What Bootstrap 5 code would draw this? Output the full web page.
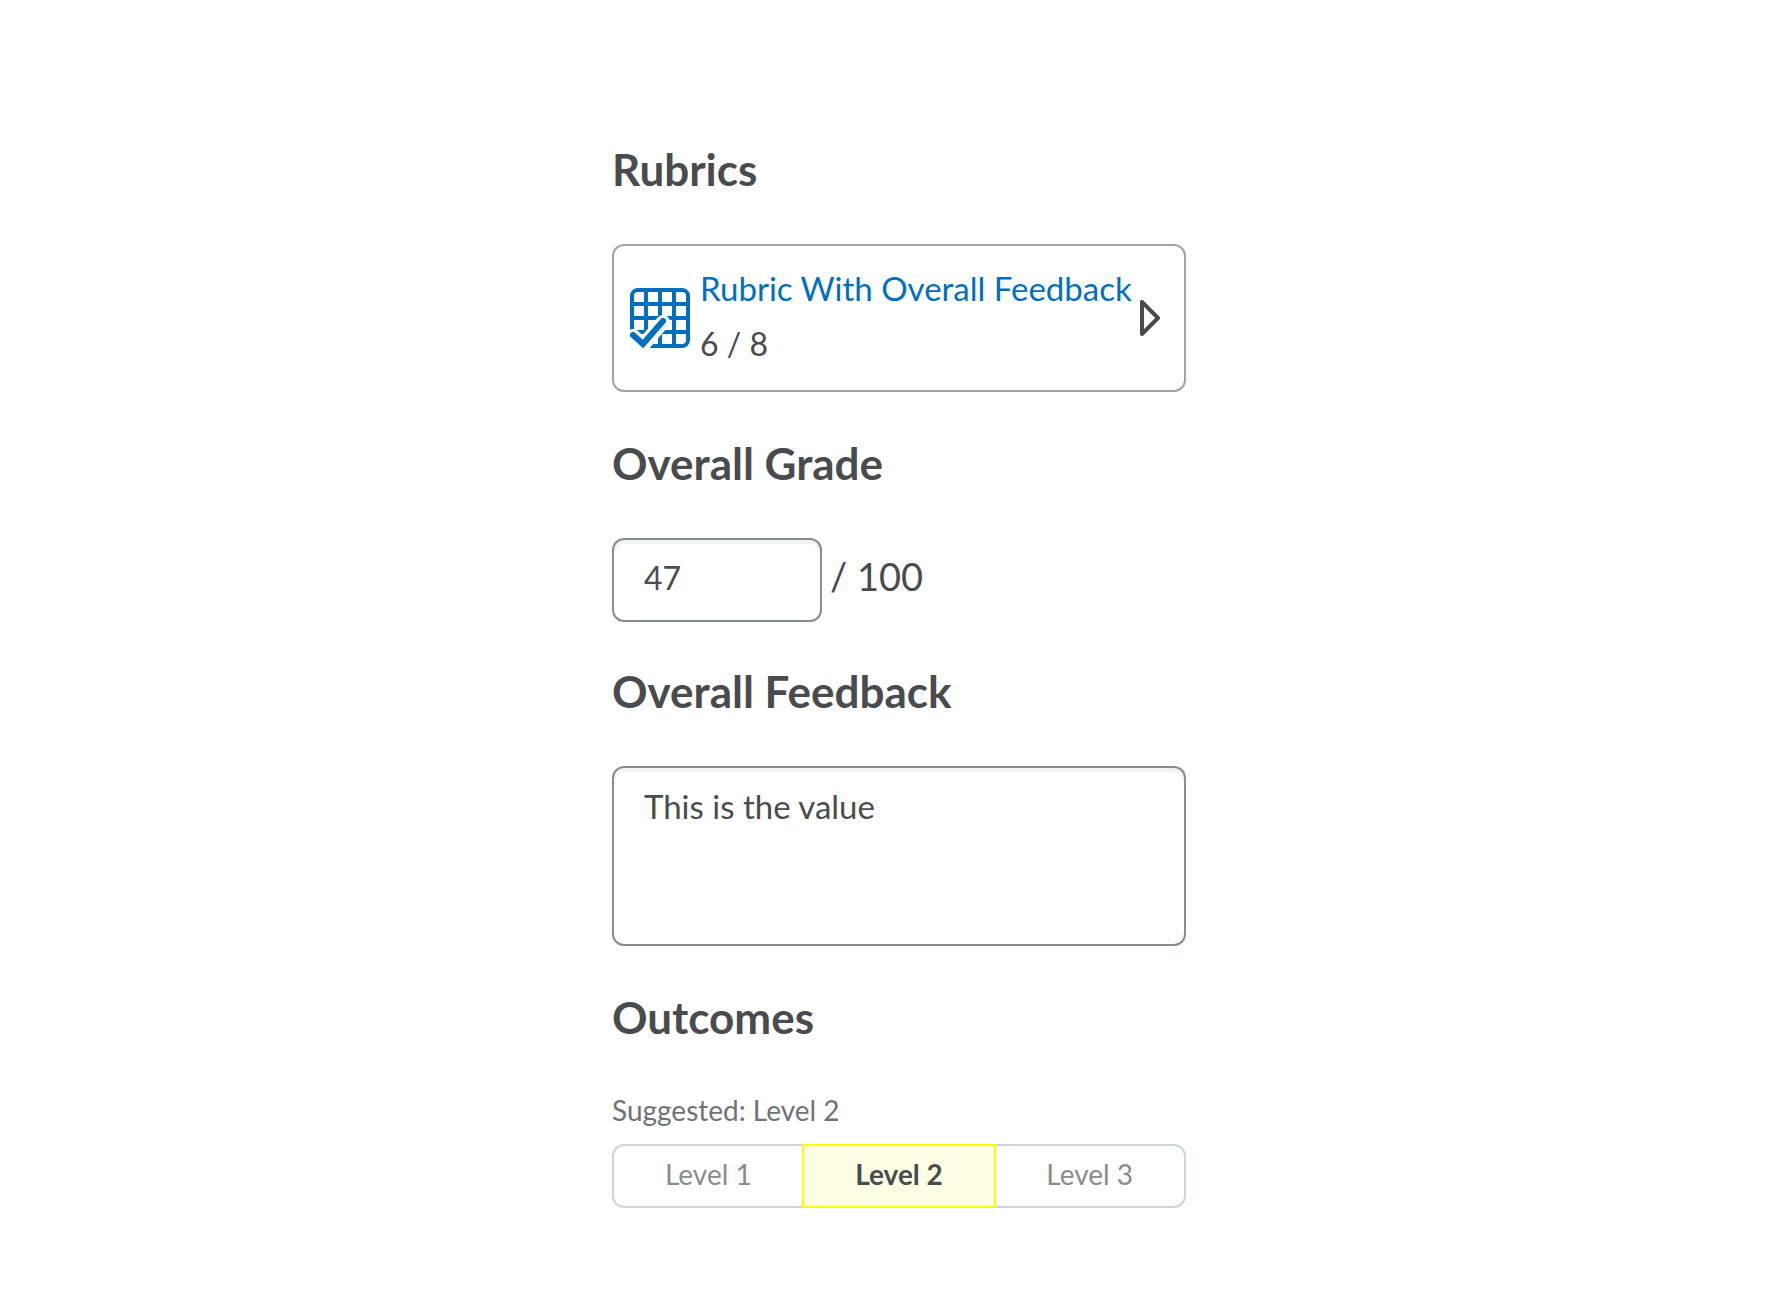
<!DOCTYPE html>
<html lang="en">
<head>
<meta charset="utf-8">
<meta name="viewport" content="width=device-width, initial-scale=1">
<title>Rubrics</title>
<link href="https://cdn.jsdelivr.net/npm/bootstrap@5.3.0/dist/css/bootstrap.min.css" rel="stylesheet">
<style>
body { font-family: Lato, "Open Sans", sans-serif; font-size: 32px; line-height: 48px; color: #494c4e; }
.grade-page { padding: 139px 0 100px 30px; }
.grade-panel { width: 100%; max-width: 574px; }
.panel-title { font-size: 44px; line-height: 60px; font-weight: 700; margin-bottom: 45px; }
.panel-block { margin-bottom: 41px; }
.grade-row { margin-bottom: 39px; }
.rubric-tile { border: 2px solid #9ea5a9; border-radius: 12px; padding: 14px 24px 18px 16px; }
.rubric-tile a { color: #006fbf; text-decoration: none; font-size: 33px; line-height: 56px; white-space: nowrap; }
.rubric-text { padding-left: 10px; }
.rubric-score { line-height: 56px; }
.rubric-icon, .rubric-arrow { margin-top: 4px; }
.grade-field.form-control { font-size: 33px; line-height: 48px; color: #494c4e; border: 2px solid #868c8f; border-radius: 12px; box-shadow: inset 0 4px 0 0 #f1f2f3; padding: 14px 30px 18px; background: #fff; }
.grade-number.form-control { width: 210px; font-size: 32px; }
.grade-outof { font-size: 38px; line-height: 76px; }
textarea.grade-field { height: 180px; resize: none; }
.suggested { font-size: 28px; line-height: 36px; color: #6e7376; margin-bottom: 16px; }
.level-group { height: 64px; }
.level-group .btn { font-size: 28px; line-height: 32px; padding: 12px 8px 16px; border: 2px solid #cdd5dc; border-radius: 12px; color: #868c8f; background: #fff; flex: 95 1 0; }
.level-group .btn:first-child { border-right-width: 0; }
.level-group .btn:last-child { border-left-width: 0; }
.level-group .btn.active { color: #494c4e; font-weight: 700; background: #ffffe5; border-color: #ff0; flex-grow: 96; }
.level-group > .btn:not(:first-child) { margin-left: 0; }
</style>
</head>
<body>
<main class="grade-page d-flex justify-content-center">
  <div class="grade-panel">
    <section>
      <h2 class="panel-title">Rubrics</h2>
      <div class="rubric-tile panel-block d-flex align-items-center">
        <svg class="rubric-icon flex-shrink-0" width="60" height="60" viewBox="0 0 60 60" aria-hidden="true">
          <g fill="none" stroke="#006fbf" stroke-width="4">
            <rect x="2" y="2" width="56" height="56" rx="6"/>
            <path d="M16 2v56M30 2v56M44 2v56M2 16h56M2 30h56M2 44h56"/>
          </g>
          <path d="M3 48l10 9 20-23" fill="none" stroke="#fff" stroke-width="14" stroke-linecap="round"/>
          <path d="M0 50v10h20l-5-6z" fill="#fff"/>
          <path d="M3 47l10 9 20-23" fill="none" stroke="#006fbf" stroke-width="6" stroke-linecap="round"/>
        </svg>
        <div class="rubric-text flex-grow-1">
          <a class="d-block" href="#">Rubric With Overall Feedback</a>
          <div class="rubric-score">6 / 8</div>
        </div>
        <svg class="rubric-arrow flex-shrink-0" width="20" height="36" viewBox="0 0 20 36" aria-hidden="true"><path d="M2 2v32L18 18z" fill="none" stroke="#494c4e" stroke-width="4" stroke-linejoin="round"/></svg>
      </div>
    </section>
    <section>
      <h2 class="panel-title"><label for="grade">Overall Grade</label></h2>
      <div class="grade-row d-flex">
        <input id="grade" class="form-control grade-field grade-number" type="text" value="47">
        <span class="grade-outof ms-2">/ 100</span>
      </div>
    </section>
    <section>
      <h2 class="panel-title"><label for="feedback">Overall Feedback</label></h2>
      <textarea id="feedback" class="form-control grade-field panel-block">This is the value</textarea>
    </section>
    <section>
      <h2 class="panel-title">Outcomes</h2>
      <div class="suggested">Suggested: Level 2</div>
      <div class="level-group btn-group d-flex" role="group" aria-label="Outcome level">
        <button type="button" class="btn">Level 1</button>
        <button type="button" class="btn active" aria-pressed="true">Level 2</button>
        <button type="button" class="btn">Level 3</button>
      </div>
    </section>
  </div>
</main>
<script src="https://cdn.jsdelivr.net/npm/bootstrap@5.3.0/dist/js/bootstrap.bundle.min.js"></script>
</body>
</html>
